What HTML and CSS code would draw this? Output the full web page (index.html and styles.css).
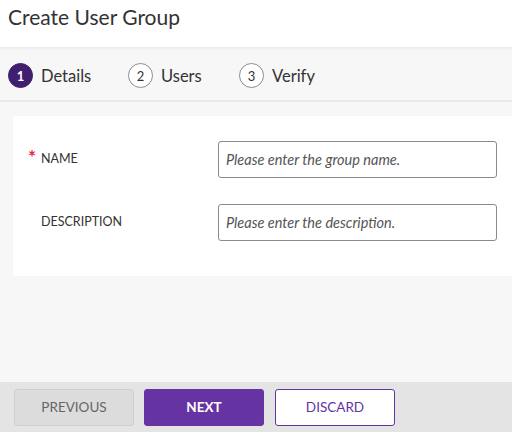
FILE: index.html
```html
<!DOCTYPE html>
<html>
<head>
<meta charset="utf-8">
<link rel="stylesheet" href="styles.css">
</head>
<body>
<div class="page">
  <header class="header">
    <h1 class="title">Create User Group</h1>
  </header>
  <nav class="steps">
    <div class="step active step-1"><span class="num">1</span><span class="label">Details</span></div>
    <div class="step step-2"><span class="num">2</span><span class="label">Users</span></div>
    <div class="step step-3"><span class="num">3</span><span class="label">Verify</span></div>
  </nav>
  <main class="content">
    <section class="card">
      <div class="row">
        <label class="field-label"><span class="req">*</span>NAME</label>
        <input class="input" type="text" placeholder="Please enter the group name.">
      </div>
      <div class="row">
        <label class="field-label"><span class="req"></span>DESCRIPTION</label>
        <input class="input" type="text" placeholder="Please enter the description.">
      </div>
    </section>
  </main>
  <footer class="footer">
    <button class="btn btn-prev">PREVIOUS</button>
    <button class="btn btn-next">NEXT</button>
    <button class="btn btn-discard">DISCARD</button>
  </footer>
</div>
</body>
</html>
```

FILE: styles.css
```css
* { box-sizing: border-box; }
html, body { margin: 0; padding: 0; }
body {
  font-family: Lato, "Liberation Sans", sans-serif;
  color: #333;
  background: #f7f7f7;
}
.page {
  width: 512px;
  height: 432px;
  display: flex;
  flex-direction: column;
  overflow: hidden;
}
.header {
  height: 47px;
  background: #fff;
  padding: 5px 8px 0;
  box-shadow: 0 1px 4px rgba(0,0,0,0.08);
  position: relative;
  z-index: 1;
}
.title {
  margin: 0;
  font-size: 21px;
  font-weight: 400;
  line-height: 24px;
  color: #333;
}
.steps {
  height: 55px;
  background: #f7f7f7;
  border-bottom: 2px solid #e9e9e9;
  display: flex;
  align-items: center;
  padding: 4px 0 0 8px;
}
.step {
  display: flex;
  align-items: center;
  gap: 8px;
}
.step-1 { width: 120px; }
.step-2 { width: 111px; }
.num {
  width: 25px;
  height: 25px;
  border-radius: 50%;
  border: 1px solid #8c8c8c;
  display: flex;
  align-items: center;
  justify-content: center;
  font-size: 13px;
  color: #333;
  background: #fff;
}
.step.active .num {
  background: #3f1f6e;
  border-color: #3f1f6e;
  color: #fff;
  font-weight: 700;
}
.label {
  font-size: 16.5px;
  color: #333;
}
.content {
  flex: 1;
  padding: 14px 0 0 13px;
  background: #f7f7f7;
}
.card {
  background: #fff;
  height: 160px;
  padding: 25px 15px 0 15px;
}
.row {
  display: flex;
  align-items: center;
  height: 37px;
  margin-bottom: 26px;
}
.field-label {
  display: flex;
  align-items: center;
  width: 190px;
  font-size: 12.5px;
  color: #333;
  position: relative;
  top: -1px;
}
.req {
  width: 13px;
  color: #e8293b;
  font-size: 19px;
  font-weight: 700;
  line-height: 1;
  position: relative;
  top: -2px;
}
.input {
  width: 279px;
  height: 37px;
  border: 1px solid #8a8a8a;
  border-radius: 3px;
  padding: 0 7px;
  font-family: Lato, "Liberation Sans", sans-serif;
  font-size: 14.5px;
  font-style: italic;
  color: #333;
  background: #fff;
}
.input::placeholder {
  color: #555;
  font-style: italic;
}
.footer {
  height: 50px;
  background: #e4e4e4;
  display: flex;
  align-items: center;
  padding: 0 0 0 14px;
  gap: 10px;
}
.btn {
  width: 120px;
  height: 37px;
  border-radius: 3px;
  font-family: Lato, "Liberation Sans", sans-serif;
  font-size: 13.5px;
  text-transform: uppercase;
  cursor: pointer;
}
.btn-prev {
  background: #dcdcdc;
  border: 1px solid #cfcfcf;
  color: #666;
}
.btn-next {
  background: #6633a3;
  border: 1px solid #6633a3;
  color: #fff;
  font-weight: 700;
}
.btn-discard {
  background: #fff;
  border: 1px solid #6633a3;
  color: #6633a3;
  margin-left: 1px;
}
```
